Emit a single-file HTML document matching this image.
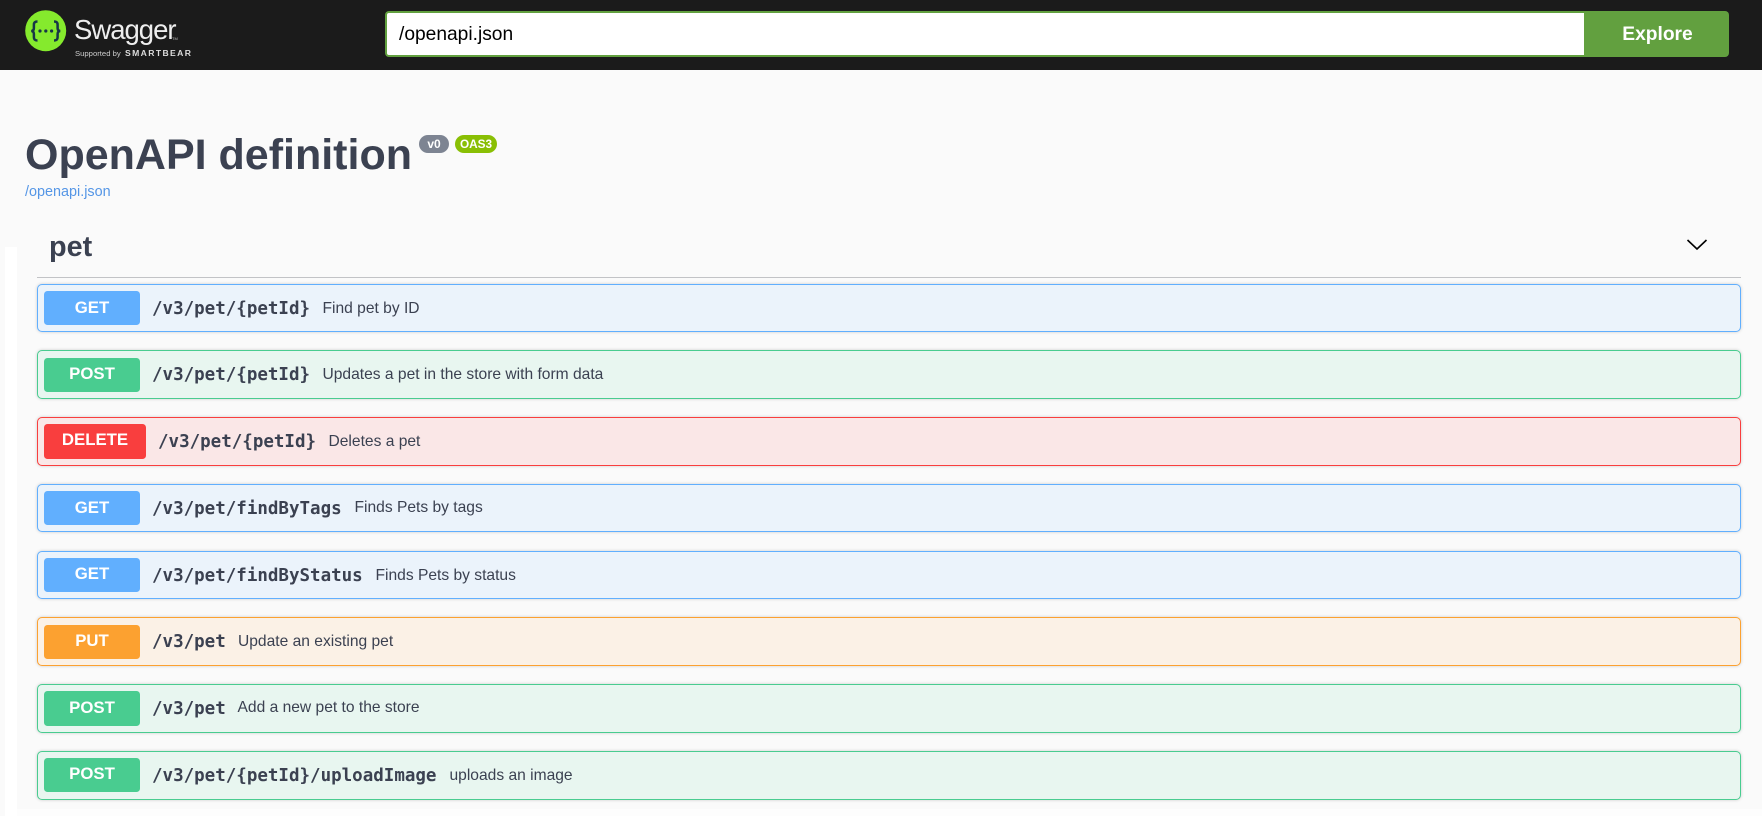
<!DOCTYPE html>
<html lang="en"><head><meta charset="utf-8"><title>Swagger UI</title>
<style>
html,body{margin:0;padding:0;width:1762px;height:816px;overflow:hidden;background:#fafafa;font-family:"Liberation Sans",Arial,sans-serif;color:#3b4151}
*{box-sizing:border-box}
.abs{position:absolute;white-space:nowrap}
#top{position:absolute;left:0;top:0;width:1762px;height:70px;background:#1b1b1b}
#in{position:absolute;left:385px;top:11px;width:1200px;height:46px;background:#fff;border:2px solid #62a03f;border-right:0;border-radius:4px 0 0 4px;font-size:19.2px;line-height:44px;padding-left:12px;color:#000}
#ex{position:absolute;left:1584px;top:11px;width:145px;height:46px;background:#62a03f;border-radius:0 4px 4px 0;color:#fff;font-weight:700;font-size:19.2px;line-height:48px;text-align:center;padding-left:2px}
.badge{position:absolute;height:18px;top:135px;border-radius:9px;color:#fff;font-weight:700;font-size:12px;line-height:18px;text-align:center}
.row{position:absolute;left:37px;width:1704px;height:49px;border:1px solid;border-radius:5px;box-shadow:0 0 3px rgba(0,0,0,.19)}
.m{position:absolute;left:6px;top:6px;height:35px;width:96px;border-radius:3.5px;color:#fff;font-weight:700;font-size:16.8px;line-height:31px;text-align:center}
.p{position:absolute;top:0;left:114px;font-family:"DejaVu Sans Mono",monospace;font-weight:700;font-size:17.5px;line-height:49px;color:#3b4151;white-space:nowrap}
.s{position:absolute;top:0;font-size:15.6px;line-height:48px;color:#3b4151;white-space:nowrap}
.k .m{line-height:33px}.k .s{line-height:46px}
.get{border-color:#61affe;background:#ebf3fb}.get .m{background:#61affe}
.post{border-color:#49cc90;background:#e8f6f0}.post .m{background:#49cc90}
.del{border-color:#f93e3e;background:#fae7e7}.del .m{background:#f93e3e;width:102px}.del .p{left:120px}
.put{border-color:#fca130;background:#fbf1e6}.put .m{background:#fca130}
</style></head><body>
<div id="top"></div>
<svg class="abs" style="left:25px;top:10px" width="42" height="42" viewBox="0 0 42 42">
<circle cx="20.7" cy="20.7" r="20.5" fill="#85ea2d"/>
<path d="M12.5 11.5c-2.6 0-3.6 1-3.6 3.2v3.4c0 1.8-.8 2.7-2.6 2.9 1.8.2 2.6 1.1 2.6 2.9v3.4c0 2.2 1 3.2 3.6 3.2M29 11.5c2.6 0 3.6 1 3.6 3.2v3.4c0 1.8.8 2.7 2.6 2.9-1.8.2-2.6 1.1-2.6 2.9v3.4c0 2.2-1 3.2-3.6 3.2" fill="none" stroke="#173647" stroke-width="2.5"/>
<circle cx="15" cy="21" r="1.6" fill="#173647"/><circle cx="20.8" cy="21" r="1.6" fill="#173647"/><circle cx="26.6" cy="21" r="1.6" fill="#173647"/>
</svg>
<div class="abs" style="left:74px;top:12px;font-size:27.5px;line-height:36px;color:#eee;letter-spacing:-1px">Swagger</div>
<div class="abs" style="left:172px;top:36px;font-size:4px;line-height:5px;color:#bbb">TM</div>
<div class="abs" style="left:75px;top:48px;font-size:7.7px;line-height:12px;color:#ccc">Supported by</div>
<div class="abs" style="left:125px;top:47px;font-size:8.6px;line-height:13px;color:#ddd;font-weight:700;letter-spacing:1.38px">SMARTBEAR</div>
<div id="in">/openapi.json</div>
<div id="ex">Explore</div>

<div class="abs" style="left:25px;top:129px;font-size:43px;line-height:52px;font-weight:700">OpenAPI definition</div>
<div class="badge" style="left:419px;width:30px;background:#7d8492">v0</div>
<div class="badge" style="left:455px;width:42px;background:#89bf04;font-size:11.8px">OAS3</div>
<div class="abs" style="left:25px;top:183px;font-size:14.4px;line-height:18px;color:#5596e6">/openapi.json</div>

<div class="abs" style="left:5px;top:247px;width:12px;height:569px;background:#fff"></div>
<div class="abs" style="left:17px;top:809px;width:1745px;height:7px;background:#fdfdfd"></div>

<div class="abs" style="left:49px;top:229px;font-size:28.8px;line-height:36px;font-weight:700">pet</div>
<svg class="abs" style="left:1685px;top:237px" width="24" height="16" viewBox="0 0 24 16"><path d="M2.5 3l9.5 9 9.5-9" fill="none" stroke="#000" stroke-width="1.6"/></svg>
<div class="abs" style="left:37px;top:276.5px;width:1704px;height:1px;background:#c2c3c6"></div>

<div class="row get" style="top:284px;height:48px"><div class="m" style="height:34px;line-height:33px">GET</div><div class="p">/v3/pet/{petId}</div><div class="s" style="left:284.5px">Find pet by ID</div></div>
<div class="row post" style="top:350px"><div class="m" style="top:7px;height:34px">POST</div><div class="p">/v3/pet/{petId}</div><div class="s" style="left:284.5px">Updates a pet in the store with form data</div></div>
<div class="row del" style="top:417px"><div class="m">DELETE</div><div class="p">/v3/pet/{petId}</div><div class="s" style="left:290.5px">Deletes a pet</div></div>
<div class="row get k" style="top:484px;height:48px"><div class="m" style="height:34px">GET</div><div class="p">/v3/pet/findByTags</div><div class="s" style="left:316.5px">Finds Pets by tags</div></div>
<div class="row get" style="top:551px;height:48px"><div class="m" style="height:34px">GET</div><div class="p">/v3/pet/findByStatus</div><div class="s" style="left:337.5px">Finds Pets by status</div></div>
<div class="row put" style="top:617px"><div class="m" style="top:7px;height:34px">PUT</div><div class="p">/v3/pet</div><div class="s" style="left:200px">Update an existing pet</div></div>
<div class="row post k" style="top:684px"><div class="m">POST</div><div class="p">/v3/pet</div><div class="s" style="left:199.5px">Add a new pet to the store</div></div>
<div class="row post" style="top:751px"><div class="m" style="height:34px">POST</div><div class="p">/v3/pet/{petId}/uploadImage</div><div class="s" style="left:411.5px">uploads an image</div></div>
</body></html>
